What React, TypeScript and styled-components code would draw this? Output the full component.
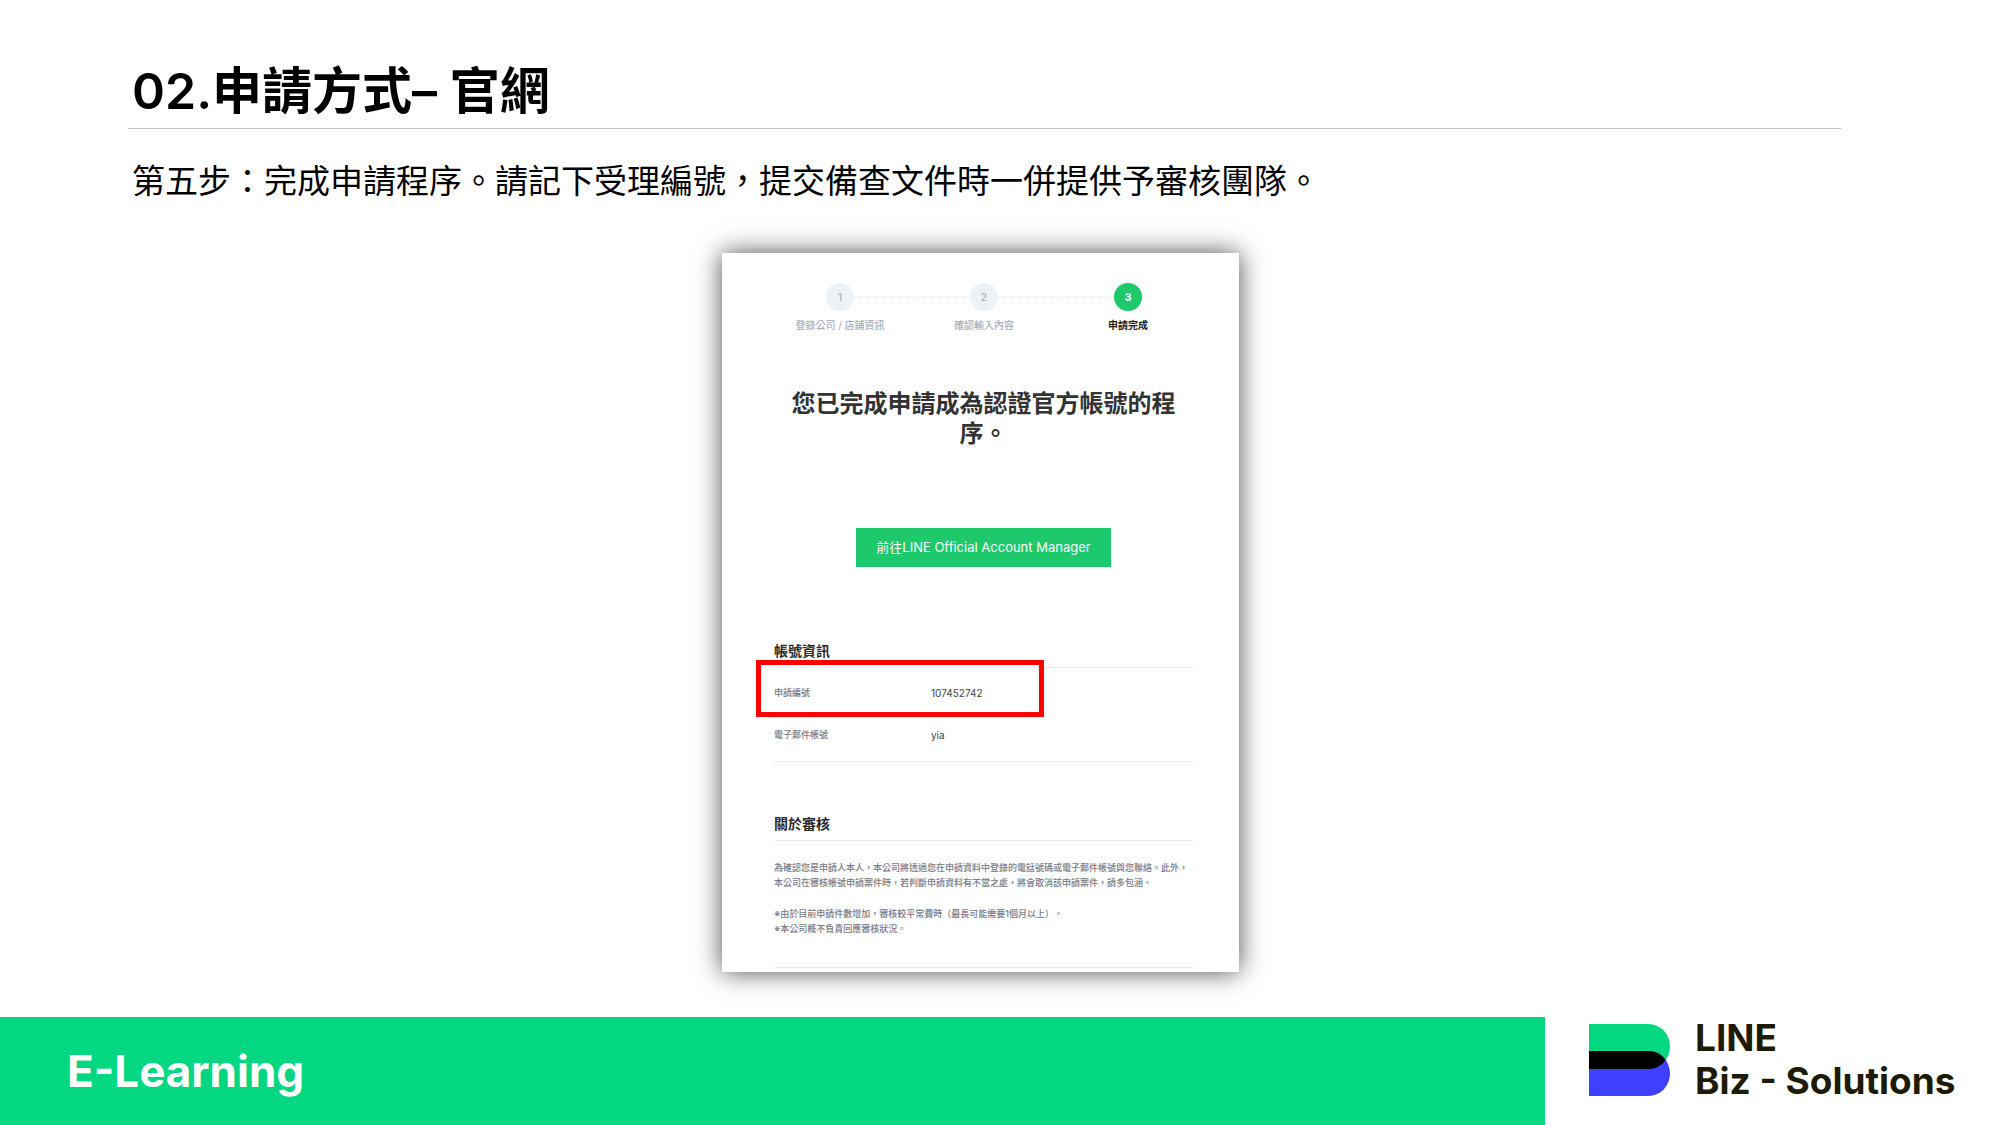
import React from "react";
import styled, { createGlobalStyle } from "styled-components";

const GlobalStyle = createGlobalStyle`
  *, *::before, *::after { box-sizing: border-box; }
  body {
    margin: 0;
    background: #ffffff;
    font-family: Inter, "Noto Sans CJK TC", sans-serif;
    color: #000000;
    text-spacing-trim: space-all;
  }
  h1, h2, h3, p, ol, dl, dd { margin: 0; padding: 0; }
`;

const Slide = styled.div`
  min-height: 100vh;
  display: flex;
  flex-direction: column;
`;

const Header = styled.header`
  margin: 61px 159px 0 128px;
`;

const Title = styled.h1`
  padding: 0 4px 7px;
  border-bottom: 1px solid #bdbdbd;
  font-size: 50px;
  font-weight: 600;
  line-height: 60px;
`;

const Subtitle = styled.p`
  margin-top: 32px;
  padding: 0 4px;
  font-size: 33px;
  line-height: 40px;
`;

const Stage = styled.main`
  flex: 1;
  display: flex;
  justify-content: center;
  align-items: flex-start;
  padding: 52px 39px 44px 0;
`;

const Card = styled.article`
  width: 517px;
  padding: 30px 46px 4px 52px;
  background: #ffffff;
  box-shadow: 0 0 24px rgba(0, 0, 0, 0.7);
`;

const Steps = styled.ol`
  list-style: none;
  display: flex;
  margin: 0 -7px 0 -6px;
`;

const Step = styled.li<{ $active?: boolean }>`
  flex: 1;
  display: flex;
  flex-direction: column;
  gap: 6px;
  color: ${(p) => (p.$active ? "#1e1e1e" : "#a9b0ba")};
  font-size: 10px;
  font-weight: ${(p) => (p.$active ? 700 : 500)};
  line-height: 16px;
  text-align: center;
`;

const Track = styled.span`
  display: flex;
  align-items: center;
`;

const Dots = styled.span<{ $hidden?: boolean }>`
  flex: 1;
  border-top: 1px dotted ${(p) => (p.$hidden ? "transparent" : "#e6e8ec")};
`;

const Badge = styled.span<{ $active?: boolean }>`
  width: 28px;
  height: 28px;
  border-radius: 50%;
  background: ${(p) => (p.$active ? "#1dc96b" : "#eef1f6")};
  color: ${(p) => (p.$active ? "#ffffff" : "#aeb3bd")};
  font-size: 11px;
  font-weight: ${(p) => (p.$active ? 700 : 500)};
  line-height: 28px;
`;

const Message = styled.h2`
  margin-top: 56px;
  padding: 0 12px;
  color: #333333;
  font-size: 24px;
  font-weight: 700;
  line-height: 30px;
  text-align: center;
`;

const ManagerButton = styled.button`
  display: block;
  margin: 79px auto 0;
  height: 39px;
  padding: 0 20px;
  border: 0;
  background: #1dc96b;
  color: #ffffff;
  font: 400 13px/39px Inter, "Noto Sans CJK TC", sans-serif;
  cursor: pointer;
`;

const Section = styled.section<{ $gap: number }>`
  margin-top: ${(p) => p.$gap}px;
  border-bottom: 1px solid #ececef;
`;

const SectionTitle = styled.h3`
  padding-bottom: 6px;
  border-bottom: 1px solid #ececef;
  color: #2b2b2b;
  font-size: 14px;
  font-weight: 700;
  line-height: 20px;
`;

const Details = styled.dl`
  display: flex;
  flex-direction: column;
  gap: 28px;
  padding: 18px 0 19px;
`;

const Detail = styled.div<{ $marked?: boolean }>`
  position: relative;
  display: grid;
  grid-template-columns: 157px 1fr;
  line-height: 14px;
  ${(p) =>
    p.$marked &&
    `&::after {
      content: "";
      position: absolute;
      top: -26px;
      left: -18px;
      width: 288px;
      height: 57px;
      border: 5px solid #ff0000;
    }`}
`;

const Term = styled.dt`
  color: #777a87;
  font-size: 9px;
  font-weight: 500;
`;

const Value = styled.dd`
  color: #444444;
  font-size: 10px;
`;

const Notes = styled.div`
  display: flex;
  flex-direction: column;
  gap: 16px;
  padding: 19px 0 31px;
  color: #777a87;
  font-size: 9px;
  font-weight: 500;
  line-height: 15px;
`;

const Footer = styled.footer`
  display: flex;
  height: 108px;
`;

const Banner = styled.div`
  flex: 1;
  padding-left: 67px;
  background: #03d782;
  color: #ffffff;
  font-size: 44px;
  font-weight: 700;
  line-height: 108px;
`;

const Brand = styled.div`
  width: 455px;
  display: flex;
  gap: 25px;
  padding: 7px 0 0 44px;
`;

const BrandName = styled.div`
  margin-top: -8px;
  color: #1e1b04;
  font-size: 37px;
  font-weight: 700;
  line-height: 43px;
  white-space: nowrap;
`;

const BrandMark = () => (
  <svg width="81" height="72" viewBox="0 0 81 72" aria-hidden="true">
    <path d="M0 0H59.500A21.500 22.500 0 0 1 59.500 45H0Z" fill="#03d782" />
    <path d="M0 27H59.500A21.500 22.500 0 0 1 59.500 72H0Z" fill="#3f40ff" />
    <path
      d="M0 27H59.500A21.500 22.500 0 0 1 76.700 36A21.500 22.500 0 0 1 59.500 45H0Z"
      fill="#000000"
    />
  </svg>
);

const steps = ["登錄公司 / 店鋪資訊", "確認輸入內容", "申請完成"];

export default function App() {
  return (
    <Slide>
      <GlobalStyle />
      <Header>
        <Title>02.申請方式– 官網</Title>
        <Subtitle>第五步：完成申請程序。請記下受理編號，提交備查文件時一併提供予審核團隊。</Subtitle>
      </Header>
      <Stage>
        <Card>
          <Steps>
            {steps.map((label, i) => {
              const active = i === steps.length - 1;
              return (
                <Step key={label} $active={active}>
                  <Track>
                    <Dots $hidden={i === 0} />
                    <Badge $active={active}>{i + 1}</Badge>
                    <Dots $hidden={active} />
                  </Track>
                  <span>{label}</span>
                </Step>
              );
            })}
          </Steps>
          <Message>您已完成申請成為認證官方帳號的程序。</Message>
          <ManagerButton type="button">前往LINE Official Account Manager</ManagerButton>
          <Section $gap={74}>
            <SectionTitle>帳號資訊</SectionTitle>
            <Details>
              <Detail $marked>
                <Term>申請編號</Term>
                <Value>107452742</Value>
              </Detail>
              <Detail>
                <Term>電子郵件帳號</Term>
                <Value>yia</Value>
              </Detail>
            </Details>
          </Section>
          <Section $gap={52}>
            <SectionTitle>關於審核</SectionTitle>
            <Notes>
              <p>
                為確認您是申請人本人，本公司將透過您在申請資料中登錄的電話號碼或電子郵件帳號與您聯絡。此外，本公司在審核帳號申請案件時，若判斷申請資料有不當之處，將會取消該申請案件，請多包涵。
              </p>
              <p>
                ※由於目前申請件數增加，審核較平常費時（最長可能需要1個月以上）。
                <br />
                ※本公司概不負責回應審核狀況。
              </p>
            </Notes>
          </Section>
        </Card>
      </Stage>
      <Footer>
        <Banner>E-Learning</Banner>
        <Brand>
          <BrandMark />
          <BrandName>
            LINE
            <br />
            Biz - Solutions
          </BrandName>
        </Brand>
      </Footer>
    </Slide>
  );
}
